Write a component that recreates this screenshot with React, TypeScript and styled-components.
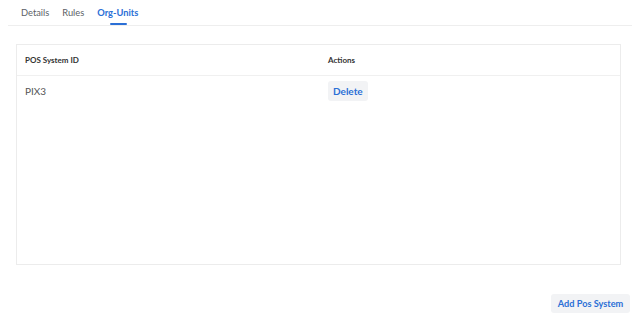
import React from 'react';
import styled, { createGlobalStyle } from 'styled-components';

const GlobalStyle = createGlobalStyle`
    body {
        margin: 0;
        background: #fff;
        font-family: Lato, 'Noto Sans', sans-serif;
        color: #333;
    }
`;

const Page = styled.div`
    padding: 0 8px;
    display: flex;
    flex-direction: column;
`;

const TabBar = styled.div`
    display: flex;
    gap: 13px;
    height: 26px;
    padding-left: 13px;
    border-bottom: 1px solid #eeeeee;
    box-sizing: border-box;
`;

const Tab = styled.div<{ active?: boolean }>`
    position: relative;
    display: flex;
    align-items: center;
    font-size: 9.3px;
    font-weight: ${(p) => (p.active ? 700 : 400)};
    color: ${(p) => (p.active ? '#2b6fd6' : '#5c5f66')};

    &::after {
        content: '';
        display: ${(p) => (p.active ? 'block' : 'none')};
        position: absolute;
        left: 50%;
        bottom: 0;
        width: 17px;
        height: 2px;
        margin-left: -8px;
        background: #2b6fd6;
        border-radius: 1px;
    }
`;

const Card = styled.div`
    margin: 18px 11px 0 8px;
    height: 221px;
    border: 1px solid #ececec;
    box-sizing: border-box;
`;

const Table = styled.div`
    display: flex;
    flex-direction: column;
`;

const Row = styled.div<{ head?: boolean }>`
    display: grid;
    grid-template-columns: 303px 1fr;
    align-items: center;
    height: 30px;
    padding: 0 8px;
    border-bottom: ${(p) => (p.head ? '1px solid #f0f0f0' : 'none')};
    font-size: ${(p) => (p.head ? '8px' : '10px')};
    font-weight: ${(p) => (p.head ? 700 : 400)};
    color: ${(p) => (p.head ? '#333' : '#555')};
`;

const Button = styled.button`
    justify-self: start;
    border: none;
    border-radius: 3px;
    background: #f2f3f5;
    color: #2b6fd6;
    font-family: inherit;
    font-weight: 700;
    font-size: 10px;
    padding: 0 5px;
    height: 20px;
    cursor: pointer;
`;

const Footer = styled.div`
    display: flex;
    justify-content: flex-end;
    margin-top: 29px;
    padding-right: 2px;
`;

const AddButton = styled(Button)`
    width: 79px;
    height: 19px;
    padding: 0;
    font-size: 9.2px;
`;

export default function App(): JSX.Element {
    return (
        <Page>
            <GlobalStyle />
            <TabBar>
                <Tab>Details</Tab>
                <Tab>Rules</Tab>
                <Tab active>Org-Units</Tab>
            </TabBar>
            <Card>
                <Table>
                    <Row head>
                        <span>POS System ID</span>
                        <span>Actions</span>
                    </Row>
                    <Row>
                        <span>PIX3</span>
                        <Button>Delete</Button>
                    </Row>
                </Table>
            </Card>
            <Footer>
                <AddButton>Add Pos System</AddButton>
            </Footer>
        </Page>
    );
}
